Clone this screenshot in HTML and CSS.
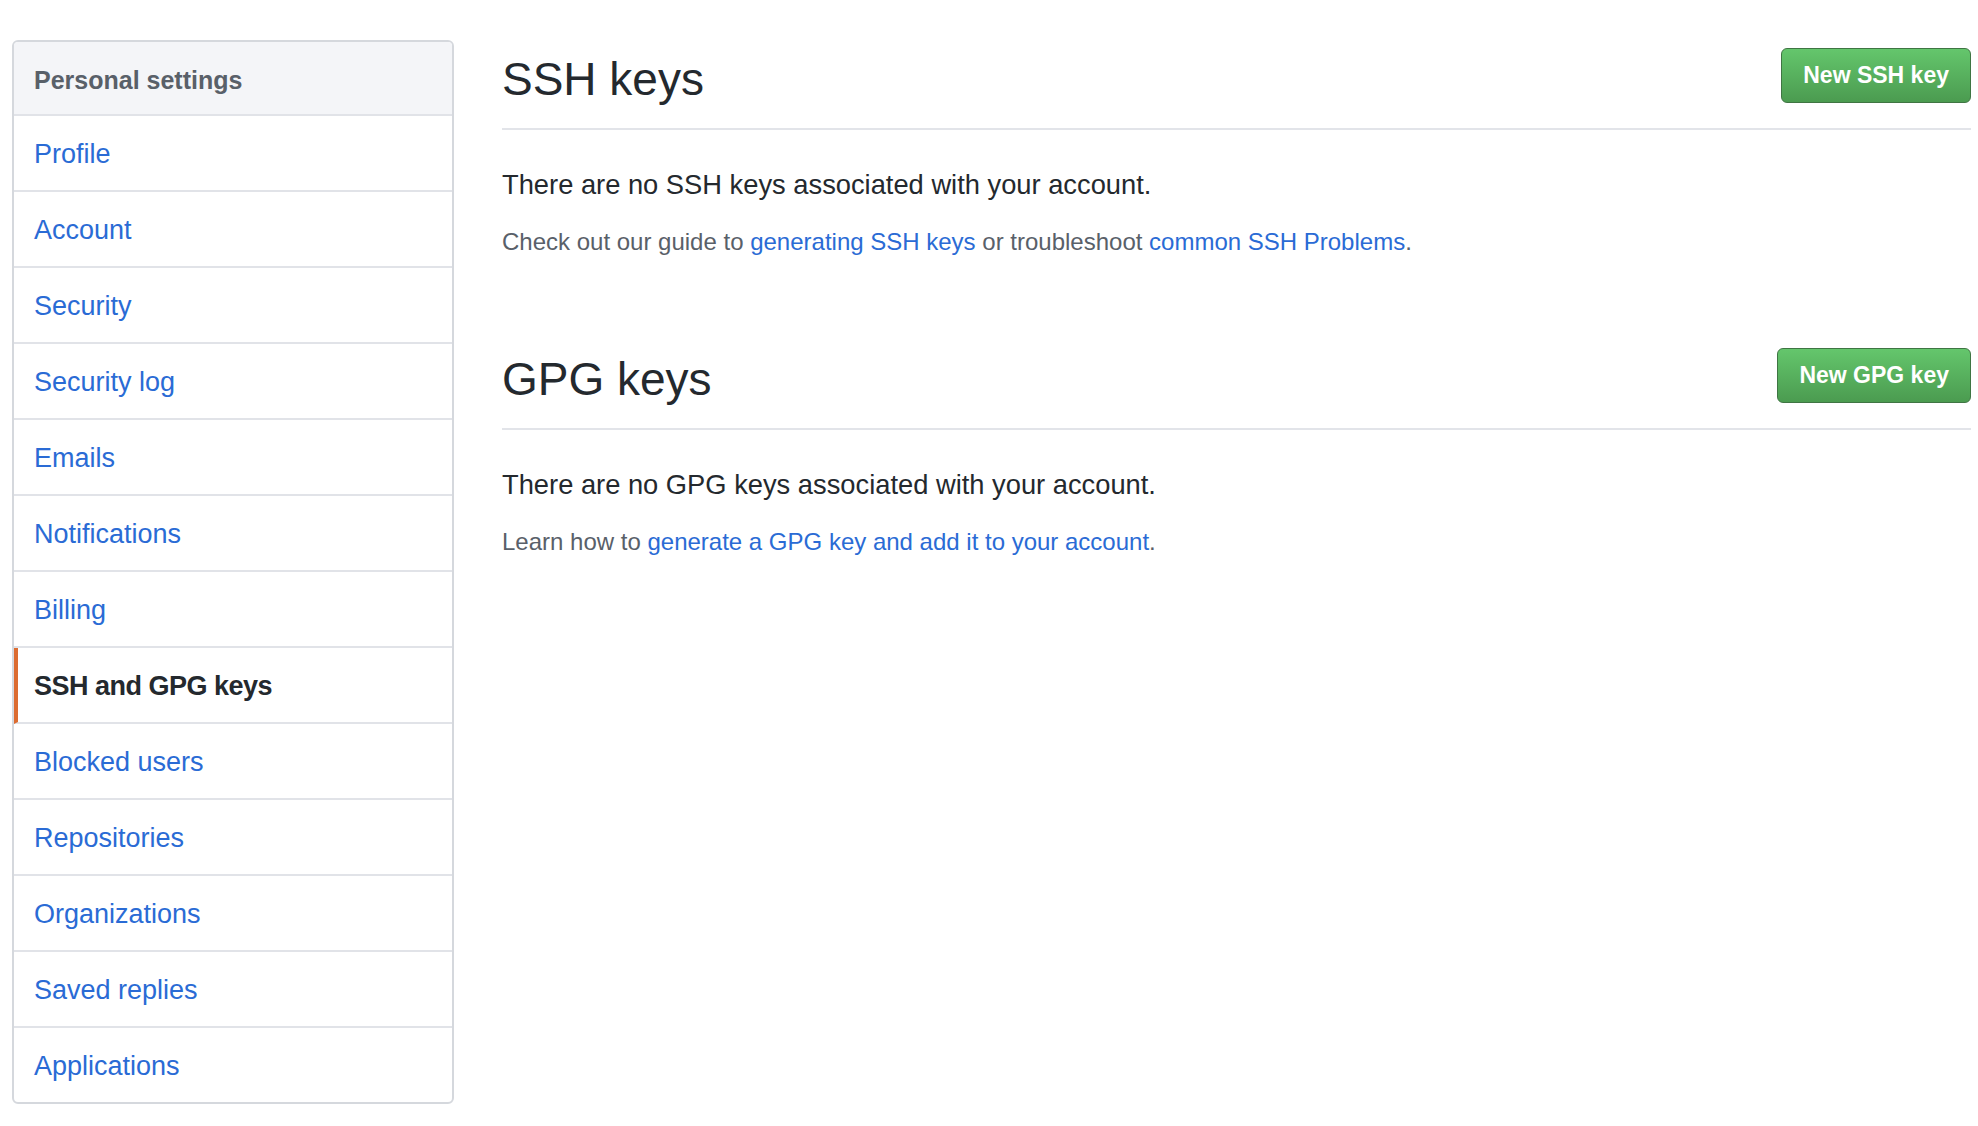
FILE: index.html
```html
<!DOCTYPE html>
<html lang="en">
<head>
<meta charset="utf-8">
<title>SSH and GPG keys</title>
<link rel="stylesheet" href="styles.css">
</head>
<body>
<div class="page">
  <nav class="menu">
    <div class="menu-heading">Personal settings</div>
    <a class="menu-item" href="#">Profile</a>
    <a class="menu-item" href="#">Account</a>
    <a class="menu-item" href="#">Security</a>
    <a class="menu-item" href="#">Security log</a>
    <a class="menu-item" href="#">Emails</a>
    <a class="menu-item" href="#">Notifications</a>
    <a class="menu-item" href="#">Billing</a>
    <a class="menu-item selected" href="#">SSH and GPG keys</a>
    <a class="menu-item" href="#">Blocked users</a>
    <a class="menu-item" href="#">Repositories</a>
    <a class="menu-item" href="#">Organizations</a>
    <a class="menu-item" href="#">Saved replies</a>
    <a class="menu-item" href="#">Applications</a>
  </nav>
  <main class="content">
    <section class="keys-section">
      <div class="subhead">
        <h2 class="subhead-title">SSH keys</h2>
        <a class="btn-primary" href="#">New SSH key</a>
      </div>
      <p class="lead">There are no SSH keys associated with your account.</p>
      <p class="note">Check out our guide to <a href="#">generating SSH keys</a> or troubleshoot <a href="#">common SSH Problems</a>.</p>
    </section>
    <section class="keys-section gpg">
      <div class="subhead">
        <h2 class="subhead-title">GPG keys</h2>
        <a class="btn-primary" href="#">New GPG key</a>
      </div>
      <p class="lead">There are no GPG keys associated with your account.</p>
      <p class="note">Learn how to <a href="#">generate a GPG key and add it to your account</a>.</p>
    </section>
  </main>
</div>
</body>
</html>
```

FILE: styles.css
```css
* {
  box-sizing: border-box;
}

html, body {
  margin: 0;
  padding: 0;
  background: #ffffff;
}

body {
  font-family: "Liberation Sans", Arial, sans-serif;
  color: #24292e;
}

.page {
  display: flex;
  align-items: flex-start;
  padding: 40px 7px 0 12px;
}

/* Sidebar menu */
.menu {
  width: 442px;
  flex: 0 0 442px;
  border: 2px solid #d5d8dd;
  border-radius: 6px;
  overflow: hidden;
  display: flex;
  flex-direction: column;
}

.menu-heading {
  height: 74px;
  padding: 3px 0 0 20px;
  line-height: 70px;
  font-size: 25px;
  font-weight: bold;
  color: #596069;
  background: #f4f5f8;
  border-bottom: 2px solid #e1e3e8;
}

.menu-item {
  display: block;
  height: 76px;
  padding: 3px 0 0 20px;
  line-height: 71px;
  font-size: 27px;
  color: #2a6bd5;
  text-decoration: none;
  border-bottom: 2px solid #e1e3e8;
}

.menu-item:last-child {
  height: 74px;
  border-bottom: 0;
}

.menu-item.selected {
  color: #24292e;
  font-weight: bold;
  letter-spacing: -0.5px;
  padding-left: 16px;
  border-left: 4px solid #dc6c31;
}

/* Main content */
.content {
  flex: 1 1 auto;
  margin-left: 48px;
  padding-top: 8px;
}

.keys-section.gpg {
  margin-top: 88px;
}

.subhead {
  display: flex;
  justify-content: space-between;
  align-items: flex-start;
  padding-bottom: 21px;
  border-bottom: 2px solid #e2e4e9;
}

.subhead-title {
  margin: 3px 0 0 0;
  font-size: 46px;
  line-height: 56px;
  font-weight: normal;
  color: #24292e;
}

.btn-primary {
  display: flex;
  align-items: center;
  height: 55px;
  padding: 0 21px;
  font-size: 23px;
  font-weight: bold;
  color: #ffffff;
  text-decoration: none;
  border: 1px solid #3f7543;
  border-radius: 6px;
  background: linear-gradient(180deg, #64c66c 0%, #4b9b50 100%);
}

.lead {
  margin: 35px 0 0 0;
  font-size: 27.3px;
  line-height: 40px;
  color: #24292e;
}

.note {
  margin: 19px 0 0 0;
  font-size: 24px;
  line-height: 36px;
  color: #596069;
}

.note a {
  color: #2a6bd5;
  text-decoration: none;
}
```
